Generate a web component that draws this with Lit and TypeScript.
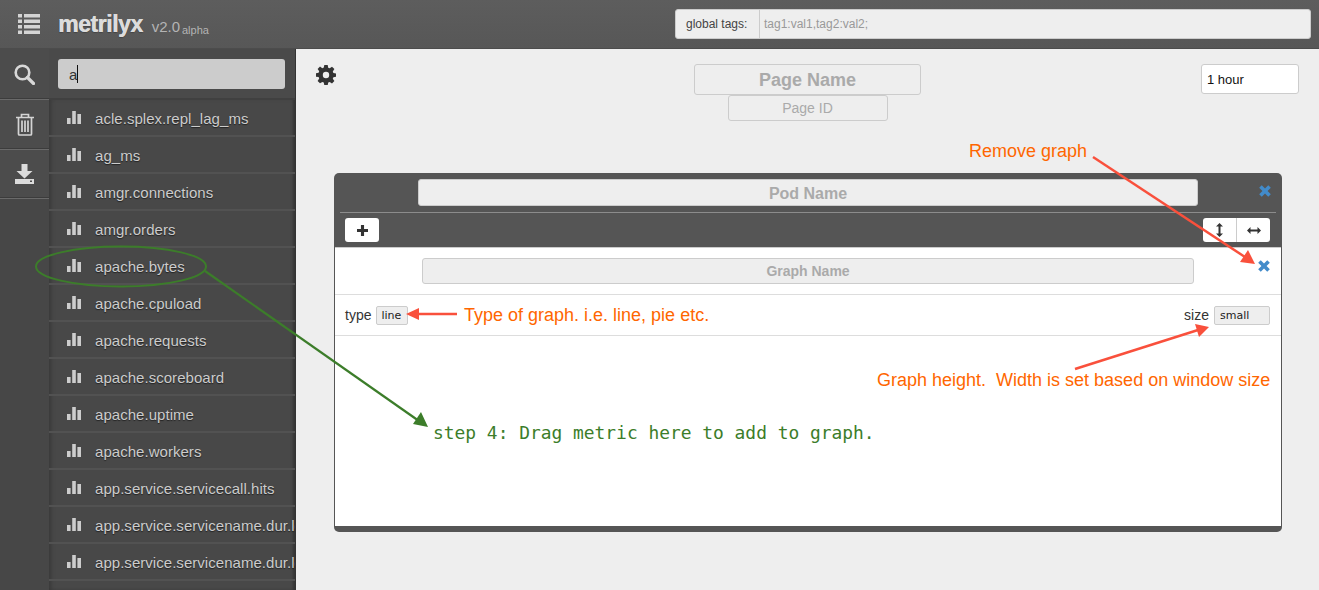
import { LitElement, html, css, svg } from "lit";
import { customElement } from "lit/decorators.js";

const METRICS = [
  "acle.splex.repl_lag_ms",
  "ag_ms",
  "amgr.connections",
  "amgr.orders",
  "apache.bytes",
  "apache.cpuload",
  "apache.requests",
  "apache.scoreboard",
  "apache.uptime",
  "apache.workers",
  "app.service.servicecall.hits",
  "app.service.servicename.dur.lower",
  "app.service.servicename.dur.lower_90",
];

const barIcon = html`<svg class="bar" width="14" height="13" viewBox="0 0 14 13"><path fill="#cdcdcd" d="M0 7h3.600v6H0zM5.200 0h3.600v13H5.200zM10.400 3H14v10h-3.600z"/></svg>`;
const xIcon = (c: string) => html`<svg width="12" height="12" viewBox="0 0 13 13"><path fill="${c}" d="M3 .2 6.500 3.700 10 .2 12.800 3 9.300 6.500l3.500 3.500-2.800 2.800-3.500-3.500L3 12.800.2 10l3.500-3.500L.2 3z"/></svg>`;

@customElement("app-root")
export class AppRoot extends LitElement {
  static styles = css`
    :host { display: block; width: 1319px; height: 590px; overflow: hidden; position: relative;
      font-family: "Liberation Sans", Arial, sans-serif; background: #eee; }
    .header { height: 49px; background: linear-gradient(#5d5d5d, #575757); display: flex; align-items: center; box-sizing: border-box; border-bottom: 1px solid #4c4c4c; }
    .logo-icon { margin-left: 18px; display: block; }
    .brand { margin-left: 18px; color: #dcdcdc; font-size: 23px; font-weight: bold; letter-spacing: -0.45px; text-shadow: 0.4px 0 0 #dcdcdc, 0 1px 1px #444; }
    .ver { margin-left: 9px; color: #b4b4b4; font-size: 15px; position: relative; top: 2px; }
    .alpha { margin-left: 2px; color: #b4b4b4; font-size: 11px; position: relative; top: 6px; }
    .tags { margin-left: auto; margin-right: 8px; width: 636px; height: 30px; box-sizing: border-box; background: #eee; border: 1px solid #ccc; border-radius: 3px; display: flex; align-items: center; font-size: 12px; }
    .tags .lab { width: 84px; box-sizing: border-box; padding-left: 10px; color: #444; border-right: 1px solid #ccc; height: 100%; display: flex; align-items: center; }
    .tags .val { padding-left: 4px; color: #999; }
    .body { display: flex; height: 541px; }
    .rail { width: 49px; background: #474747; flex: none; }
    .cell { display: flex; align-items: center; justify-content: center; border-bottom: 1px solid #6a6a6a; box-shadow: inset 0 -1px 0 #3c3c3c; box-sizing: border-box; background: #4c4c4c; }
    .c1 { height: 51px; }
    .c2 { height: 50px; }
    .c3 { height: 49px; }
    .side { width: 247px; flex: none; background: #484848; border-right: 1px solid #333; box-sizing: border-box; box-shadow: inset -3px 0 3px -1px #333; }
    .search { height: 51px; box-sizing: border-box; padding: 10px 10px 0 9px; background: #4a4a4a; border-bottom: 2px solid #404040; }
    .search .box { height: 30px; background: #ccc; border-radius: 3px; box-sizing: border-box; padding-left: 11px; font-size: 15px; color: #333; display: flex; align-items: center; }
    .caret { display: inline-block; width: 1px; height: 18px; background: #111; }
    .list { overflow: hidden; box-shadow: inset 4px 0 4px -2px #383838; height: 490px; }
    .row { height: 37px; box-sizing: border-box; border-bottom: 2px solid #525252; display: flex; align-items: center; padding: 2px 0 0 18px; overflow: hidden; white-space: nowrap; color: #cccccc; font-size: 15px; letter-spacing: 0.04px; text-shadow: 0 1px 1px #222; }
    .spacer { height: 37px; }
    .bar { flex: none; margin-right: 14px; position: relative; top: -1px; }
    .main { flex: 1; padding: 15px 20px 0 20px; box-sizing: border-box; min-width: 0; }
    .top { display: grid; grid-template-columns: 1fr auto 1fr; align-items: start; }
    .gear { display: block; margin-top: 1px; }
    .names { display: flex; flex-direction: column; align-items: center; }
    .field { background: #eee; border: 1px solid #ccc; border-radius: 3px; box-sizing: border-box; display: flex; align-items: center; justify-content: center; color: #aaa; }
    .pn { width: 227px; height: 31px; font-size: 18px; font-weight: bold; padding-top: 1px; }
    .pi { width: 160px; height: 26px; font-size: 14px; }
    .time { justify-self: end; width: 98px; height: 30px; background: #fff; border: 1px solid #ccc; border-radius: 3px; box-sizing: border-box; font-size: 13px; color: #111; padding-left: 5px; display: flex; align-items: center; }
    .pod { margin: 52px 17px 0 18px; height: 359px; background: #555; border-radius: 5px; box-sizing: border-box; padding: 0 1px 6px; display: flex; flex-direction: column; }
    .pod-head { height: 40px; margin: 0 5px; border-bottom: 1px solid #8c8c8c; box-sizing: border-box; display: flex; align-items: flex-start; padding: 6px 0 0 78px; }
    .pod-head .field { width: 780px; height: 27px; font-size: 16px; font-weight: bold; padding-top: 2px; }
    .pod-x { margin-left: auto; margin-right: 5px; margin-top: 6px; line-height: 0; }
    .pod-tools { height: 34px; display: flex; padding: 5px 11px 0 10px; justify-content: space-between; align-items: flex-start; box-sizing: border-box; }
    .btn { height: 24px; background: #fff; border-radius: 3px; display: flex; align-items: center; justify-content: center; box-sizing: border-box; }
    .plus { width: 34px; }
    .grp { display: flex; background: #fff; border-radius: 3px; height: 24px; }
    .seg { width: 33px; display: flex; align-items: center; justify-content: center; }
    .seg + .seg { border-left: 1px solid #ccc; }
    .graph { flex: 1; background: #fff; display: flex; flex-direction: column; }
    .g-head { height: 48px; box-sizing: border-box; border-bottom: 1px solid #ddd; display: flex; align-items: flex-start; padding: 10px 0 0 87px; border-top: 1px solid #ccc; }
    .g-head .field { width: 772px; height: 26px; font-size: 14px; font-weight: bold; }
    .g-x { margin-left: auto; margin-right: 11px; margin-top: 2px; line-height: 0; }
    .g-type { height: 41px; box-sizing: border-box; border-bottom: 1px solid #ddd; display: flex; align-items: center; justify-content: space-between; padding: 0 11px 0 10px; font-size: 14px; color: #333; }
    .pick { display: inline-flex; align-items: center; }
    .sel { margin-left: 5px; background: #eee; border: 1px solid #ccc; border-radius: 2px; height: 19px; box-sizing: border-box; font-family: "DejaVu Sans", sans-serif; font-size: 11px; color: #222; display: inline-flex; align-items: center; padding-left: 4px; }
    .sel.line { width: 32px; }
    .sel.small { width: 56px; padding-left: 5px; }
    .overlay { position: absolute; inset: 0; pointer-events: none; }
    .note { position: absolute; color: #f60; font-size: 18px; line-height: 20px; white-space: nowrap; }
    .n1 { left: 969px; top: 141px; }
    .n2 { left: 464px; top: 305px; }
    .n3 { left: 877px; top: 370px; }
    .step { position: absolute; left: 433px; top: 422px; line-height: 22px; color: #3c7d2a; font-family: "DejaVu Sans Mono", monospace; font-size: 17.9px; white-space: nowrap; }
  `;

  render() {
    return html`
      <div class="header">
        <svg class="logo-icon" width="22" height="20" viewBox="0 0 22 20"><path fill="#d4d4d4" d="M0 0h4v3.500H0zM6 0h16v3.500H6zM0 5.500h4V9H0zM6 5.500h16V9H6zM0 11h4v3.500H0zM6 11h16v3.500H6zM0 16.500h4V20H0zM6 16.500h16V20H6z"/></svg>
        <span class="brand">metrilyx</span><span class="ver">v2.0</span><span class="alpha">alpha</span>
        <div class="tags"><div class="lab">global tags:</div><div class="val">tag1:val1,tag2:val2;</div></div>
      </div>
      <div class="body">
        <div class="rail">
          <div class="cell c1"><svg width="21" height="21" viewBox="0 0 21 21"><circle cx="8.500" cy="8.500" r="6.800" fill="none" stroke="#d8d8d8" stroke-width="2.600"/><path d="M13.500 13.500 19.500 19.500" stroke="#d8d8d8" stroke-width="3.200" stroke-linecap="round"/></svg></div>
          <div class="cell c2"><svg width="18" height="23" viewBox="0 0 18 23"><path fill="none" stroke="#d4d4d4" stroke-width="1.700" d="M0 4.500h18M5.500 4.500V1.500h7v3M2.500 4.500v16.500a1 1 0 0 0 1 1h11a1 1 0 0 0 1-1V4.500M6 7.500v11.500M9 7.500v11.500M12 7.500v11.500"/></svg></div>
          <div class="cell c3"><svg width="19" height="20" viewBox="0 0 19 20"><path fill="#dcdcdc" fill-rule="evenodd" d="M6.500 0h6v7h5l-8 7.500-8-7.500h5zM0 15h19v5H0zM15 16.500v1.500h2v-1.500z"/></svg></div>
        </div>
        <div class="side">
          <div class="search"><div class="box">a<span class="caret"></span></div></div>
          <div class="list">${METRICS.map((m) => html`<div class="row">${barIcon}${m}</div>`)}<div class="spacer"></div></div>
        </div>
        <div class="main">
          <div class="top">
            <svg class="gear" width="20" height="20" viewBox="0 0 20 20"><path fill="#333" fill-rule="evenodd" d="M8.300 0h3.400l.5 2.700 1.500.6 2.300-1.600 2.400 2.400-1.600 2.300.6 1.500 2.700.5v3.400l-2.700.5-.6 1.500 1.600 2.300-2.400 2.400-2.300-1.600-1.500.6-.5 2.700H8.300l-.5-2.700-1.500-.6L4 18.300l-2.400-2.400 1.600-2.300-.6-1.500L-.1 11.700V8.300l2.700-.5.6-1.500L1.600 4 4 1.600l2.300 1.600 1.500-.6zM10 6.800a3.200 3.200 0 1 0 0 6.400 3.200 3.200 0 0 0 0-6.400z"/></svg>
            <div class="names"><div class="field pn">Page Name</div><div class="field pi">Page ID</div></div>
            <div class="time">1 hour</div>
          </div>
          <div class="pod">
            <div class="pod-head"><div class="field">Pod Name</div><span class="pod-x">${xIcon("#428bca")}</span></div>
            <div class="pod-tools">
              <div class="btn plus"><svg width="11" height="11" viewBox="0 0 12 12"><path fill="#333" d="M4.300 0h3.400v4.300H12v3.400H7.700V12H4.300V7.700H0V4.300h4.300z"/></svg></div>
              <div class="grp">
                <div class="seg"><svg width="7" height="14" viewBox="0 0 7 14"><path fill="#333" d="M3.500 0 7 3.500H4.500v7H7L3.500 14 0 10.500h2.500v-7H0z"/></svg></div>
                <div class="seg"><svg width="14" height="7" viewBox="0 0 14 7"><path fill="#333" d="M0 3.500 3.500 0v2.500h7V0L14 3.500 10.500 7V4.500h-7V7z"/></svg></div>
              </div>
            </div>
            <div class="graph">
              <div class="g-head"><div class="field">Graph Name</div><span class="g-x">${xIcon("#428bca")}</span></div>
              <div class="g-type">
                <span class="pick">type<span class="sel line">line</span></span>
                <span class="pick">size<span class="sel small">small</span></span>
              </div>
            </div>
          </div>
        </div>
      </div>
      <svg class="overlay" width="1319" height="590" viewBox="0 0 1319 590">
        ${svg`
          <ellipse cx="121" cy="266.500" rx="85" ry="20" fill="none" stroke="#3c7d2a" stroke-width="2"/>
          <path d="M205 271 419 421" stroke="#3c7d2a" stroke-width="2.200" fill="none"/>
          <path d="M428 427 413 424 421 412z" fill="#3c7d2a"/>
          <path d="M1093 157 1245 257" stroke="#f9503c" stroke-width="2.500" fill="none"/>
          <path d="M1255 264 1240 262 1248 250z" fill="#f9503c"/>
          <path d="M457 314H416" stroke="#f9503c" stroke-width="2.500" fill="none"/>
          <path d="M406 314 419 308v12z" fill="#f9503c"/>
          <path d="M1075 369 1198 330" stroke="#f9503c" stroke-width="2.500" fill="none"/>
          <path d="M1209 327 1199 337 1195 324z" fill="#f9503c"/>
        `}
      </svg>
      <div class="note n1">Remove graph</div>
      <div class="note n2">Type of graph. i.e. line, pie etc.</div>
      <div class="note n3">Graph height.&nbsp; Width is set based on window size</div>
      <div class="step">step 4: Drag metric here to add to graph.</div>
    `;
  }
}
